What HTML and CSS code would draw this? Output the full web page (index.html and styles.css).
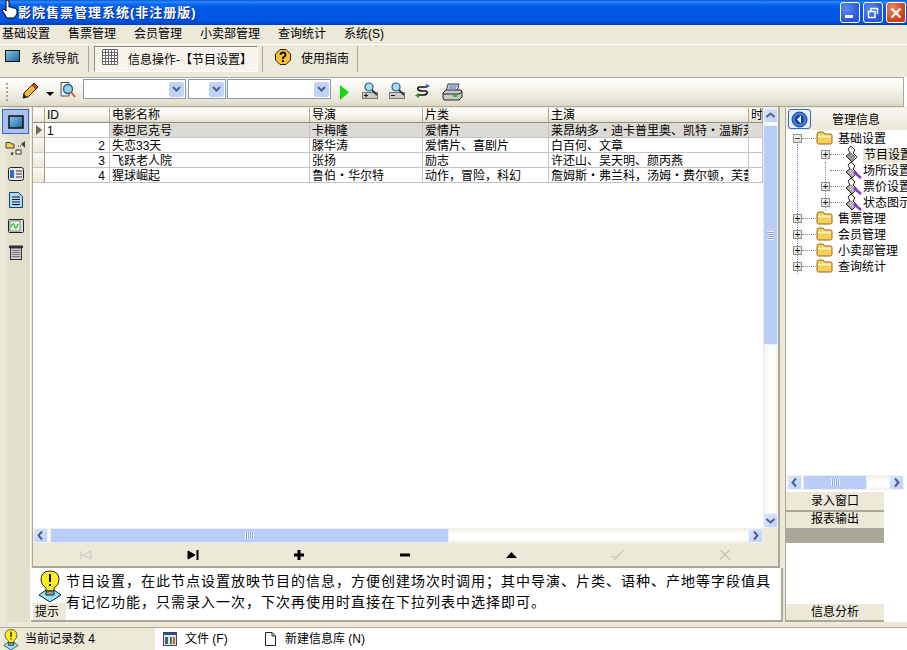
FILE: index.html
```html
<!DOCTYPE html>
<html lang="zh">
<head>
<meta charset="utf-8">
<title>影院售票管理系统</title>
<link rel="stylesheet" href="styles.css">
</head>
<body>
<svg class="cursor" width="18" height="19" viewBox="0 0 18 19"><path d="M6 0 Q8 0 8 2 V7 L10 7 L12 8 L14 8 L16 10 V14 L13 18 H6 L1 10 L3 9 L5 11 V2 Q5 0 6 0Z" fill="#fff" stroke="#000"/></svg>

<header class="titlebar">
  <span class="title">影院售票管理系统(非注册版)</span>
  <div class="winbtns">
    <span class="winbtn"><i class="min"></i></span>
    <span class="winbtn"><svg width="12" height="12" viewBox="0 0 12 12"><path d="M4 1.5 H10.5 V7 M1.5 4.5 H8 V10.5 H1.5Z M4 1 V4" fill="none" stroke="#fff" stroke-width="1.4"/></svg></span>
    <span class="winbtn close"><svg width="12" height="12" viewBox="0 0 12 12"><path d="M1.5 1.5 L10.5 10.5 M10.5 1.5 L1.5 10.5" stroke="#fff" stroke-width="2"/></svg></span>
  </div>
</header>

<nav class="menubar">
  <span>基础设置</span><span>售票管理</span><span>会员管理</span><span>小卖部管理</span><span>查询统计</span><span>系统(S)</span>
</nav>

<div class="tabbar">
  <div class="tab tab-first">
    <svg width="15" height="12" viewBox="0 0 15 12"><defs><linearGradient id="scr" x1="0" y1="0" x2="1" y2="1"><stop offset="0" stop-color="#8fc4e8"/><stop offset="1" stop-color="#14689c"/></linearGradient></defs><rect x=".5" y=".5" width="14" height="11" fill="url(#scr)" stroke="#111"/></svg>
    <span>系统导航</span>
  </div>
  <div class="tab tab-active">
    <svg width="16" height="16" viewBox="0 0 16 16"><path d="M.5 .5 H15.5 V15.5 H.5Z M3.5 0 V16 M6.5 0 V16 M9.5 0 V16 M12.5 0 V16 M0 3.5 H16 M0 6.5 H16 M0 9.5 H16 M0 12.5 H16" fill="#fff" stroke="#666"/></svg>
    <span>信息操作-【节目设置】</span>
  </div>
  <div class="tab tab-help">
    <svg width="16" height="16" viewBox="0 0 16 16"><path d="M5 .5 H11 L15.5 5 V11 L11 15.5 H5 L.5 11 V5Z" fill="#fbc02d" stroke="#222"/><path d="M5.5 6 Q5.5 3.5 8 3.5 Q10.5 3.5 10.5 6 Q10.5 7.5 8 8.5 V10" fill="none" stroke="#111" stroke-width="1.8"/><rect x="7" y="11" width="2" height="2" fill="#111"/></svg>
    <span>使用指南</span>
  </div>
</div>

<div class="toolbar">
  <span class="grip"></span>
  <svg class="t-pencil" width="17" height="17" viewBox="0 0 17 17"><path d="M12 1 L16 5 L6 15 L1 16 L2 11Z" fill="#f7b733" stroke="#222"/><path d="M12 1 L16 5 L14 7 L10 3Z" fill="#d9432f" stroke="#222" stroke-width=".7"/><path d="M1 16 L2 12 L5 15Z" fill="#222"/></svg>
  <span class="t-drop"></span>
  <svg class="t-find" width="16" height="17" viewBox="0 0 16 17"><path d="M1 .5 H9 V14 H1Z" fill="#eee" stroke="#555"/><circle cx="8" cy="7" r="4.5" fill="#8fd0ee" stroke="#2a5c7c" stroke-width="1.4"/><path d="M11 10 L15 15" stroke="#d9582f" stroke-width="2"/></svg>
  <div class="combo c1"><b><svg width="15" height="15" viewBox="0 0 15 15"><path d="M4 5 L7.5 8.5 L11 5" fill="none" stroke="#4d6185" stroke-width="2"/></svg></b></div>
  <div class="combo c2"><b><svg width="15" height="15" viewBox="0 0 15 15"><path d="M4 5 L7.5 8.5 L11 5" fill="none" stroke="#4d6185" stroke-width="2"/></svg></b></div>
  <div class="combo c3"><b><svg width="15" height="15" viewBox="0 0 15 15"><path d="M4 5 L7.5 8.5 L11 5" fill="none" stroke="#4d6185" stroke-width="2"/></svg></b></div>
  <svg class="t-play" width="9" height="15" viewBox="0 0 9 15"><path d="M0 0 L9 7.5 L0 15Z" fill="#12d812"/></svg>
  <svg class="t-zoom" width="16" height="17" viewBox="0 0 16 17"><rect x=".5" y="10.5" width="15" height="6" fill="#ccc" stroke="#777"/><path d="M2 13.5 H6 M4 11.5 V15.5" stroke="#111"/><circle cx="7" cy="5" r="4" fill="#a8dcf2" stroke="#2a5c7c" stroke-width="1.2"/><path d="M10 8 L15 13" stroke="#333" stroke-width="1.8"/></svg>
  <svg class="t-zoom" width="16" height="17" viewBox="0 0 16 17"><rect x=".5" y="10.5" width="15" height="6" fill="#ccc" stroke="#777"/><path d="M2 13.5 H6" stroke="#111"/><circle cx="7" cy="5" r="4" fill="#a8dcf2" stroke="#2a5c7c" stroke-width="1.2"/><path d="M10 8 L15 13" stroke="#333" stroke-width="1.8"/></svg>
  <svg class="t-swap" width="15" height="15" viewBox="0 0 15 15"><path d="M12 4 H5 Q2 4 3 6.5 Q4 8 7 8 H10 Q13 8 12 10.5 Q11 12 8 12 H3" fill="none" stroke="#111" stroke-width="1.6"/><path d="M11 1 L15 3 L11 5Z" fill="#1f55d8"/><path d="M4 10 L0 12.5 L4 15Z" fill="#1a9a1a"/></svg>
  <svg class="t-print" width="21" height="18" viewBox="0 0 21 18"><path d="M6 1 H17 L15 9 H4Z" fill="#dfe6f6" stroke="#333"/><path d="M7 3 H15 M6.5 5 H14" stroke="#4267c6"/><path d="M1 10 L4 7 H19 L20 9 V14 L17 17 H2 L1 15Z" fill="#c9c9c9" stroke="#222"/><path d="M1 11 H17 L20 9" fill="none" stroke="#222"/><rect x="11" y="12" width="4" height="2" fill="#1cc71c"/></svg>
</div>

<main class="main">
  <aside class="sidebar">
    <div class="side-btn side-active"><svg width="16" height="14" viewBox="0 0 16 14"><rect x="1" y="1" width="14" height="12" fill="url(#scr)" stroke="#111" stroke-width="1.5"/></svg></div>
    <div class="side-btn"><svg width="21" height="16" viewBox="0 0 21 16"><path d="M1 2.5 H5 L6 4 H9 V8 H1Z" fill="#f5d048" stroke="#444"/><path d="M16 4 L20 1 V8Z" fill="#444"/><path d="M6.5 12.5 H9 M13 9 V13 M13 6 H16" stroke="#333" stroke-dasharray="1 1"/><rect x="11" y="10" width="5" height="4" fill="#fff" stroke="#333"/><rect x="6" y="13" width="2" height="2" fill="#444"/></svg></div>
    <div class="side-btn"><svg width="16" height="14" viewBox="0 0 16 14"><rect x=".5" y=".5" width="15" height="13" rx="2" fill="#e9e9e9" stroke="#222"/><rect x="2" y="3" width="4" height="8" fill="#3f6ac0"/><path d="M8 4 H14 M8 7 H14 M8 10 H14" stroke="#333"/></svg></div>
    <div class="side-btn"><svg width="14" height="16" viewBox="0 0 14 16"><path d="M.5 .5 H9.5 L13.5 4.5 V15.5 H.5Z" fill="#a8dcfa" stroke="#1c3d75"/><path d="M3 5 H11 M3 7.5 H11 M3 10 H11 M3 12.5 H11" stroke="#112"/></svg></div>
    <div class="side-btn"><svg width="16" height="14" viewBox="0 0 16 14"><rect x=".5" y=".5" width="15" height="13" rx="1" fill="#ddd" stroke="#222"/><rect x="2" y="2" width="10" height="10" fill="#e8f6e8" stroke="#333" stroke-width=".5"/><path d="M3 8 Q5 2 6.5 7 Q8 12 10 5" fill="none" stroke="#1fc41f" stroke-width="1.3"/></svg></div>
    <div class="side-btn"><svg width="16" height="15" viewBox="0 0 16 15"><rect x="1" y=".5" width="14" height="2.5" fill="#333"/><rect x="2.5" y="3" width="11" height="11.5" fill="#ccc" stroke="#333"/><path d="M4 5.5 H12 M4 7.5 H12 M4 9.5 H12 M4 11.5 H12" stroke="#777"/></svg></div>
  </aside>

  <section class="center">
    <div class="gridpanel">
      <div class="gridbody">
        <div class="gridleft">
          <div class="tablewrap">
            <table class="grid">
              <colgroup><col class="c-ind"><col class="c-id"><col class="c-name"><col class="c-dir"><col class="c-gen"><col class="c-lead"><col class="c-time"></colgroup>
              <thead>
                <tr><th></th><th>ID</th><th>电影名称</th><th>导演</th><th>片类</th><th>主演</th><th>时</th></tr>
              </thead>
              <tbody>
                <tr class="sel"><td class="ind"><i class="arrow"></i></td><td class="idl">1</td><td class="g">泰坦尼克号</td><td class="g">卡梅隆</td><td class="g">爱情片</td><td class="g">莱昂纳多・迪卡普里奥、凯特・温斯莱特</td><td class="g"></td></tr>
                <tr><td class="ind"></td><td class="idr">2</td><td>失恋33天</td><td>滕华涛</td><td>爱情片、喜剧片</td><td>白百何、文章</td><td></td></tr>
                <tr><td class="ind"></td><td class="idr">3</td><td>飞跃老人院</td><td>张扬</td><td>励志</td><td>许还山、吴天明、颜丙燕</td><td></td></tr>
                <tr><td class="ind"></td><td class="idr">4</td><td>猩球崛起</td><td>鲁伯・华尔特</td><td>动作，冒险，科幻</td><td>詹姆斯・弗兰科，汤姆・费尔顿，芙蕾达・平托</td><td></td></tr>
              </tbody>
            </table>
          </div>
          <div class="hscroll">
            <span class="sb-btn"><svg width="13" height="13" viewBox="0 0 13 13"><path d="M8 2.5 L4.5 6.5 L8 10.5" fill="none" stroke="#4d6185" stroke-width="2"/></svg></span>
            <span class="hthumb main-thumb"><i class="grip-h"></i></span>
            <span class="sb-fill"></span>
            <span class="sb-btn"><svg width="13" height="13" viewBox="0 0 13 13"><path d="M5 2.5 L8.5 6.5 L5 10.5" fill="none" stroke="#4d6185" stroke-width="2"/></svg></span>
          </div>
        </div>
        <div class="vscroll">
          <span class="sb-btn"><svg width="13" height="13" viewBox="0 0 13 13"><path d="M2.5 8 L6.5 4.5 L10.5 8" fill="none" stroke="#4d6185" stroke-width="2"/></svg></span>
          <span class="vthumb"><i class="grip-v"></i></span>
          <span class="sb-fill"></span>
          <span class="sb-btn"><svg width="13" height="13" viewBox="0 0 13 13"><path d="M2.5 5 L6.5 8.5 L10.5 5" fill="none" stroke="#4d6185" stroke-width="2"/></svg></span>
        </div>
      </div>
      <div class="navbar">
        <span class="nav-cell"><svg width="12" height="10" viewBox="0 0 12 10"><path d="M1 1 V9 M11 1 L3 5 L11 9Z" fill="none" stroke="#c9c6b8"/></svg></span>
        <span class="nav-cell"><svg width="12" height="10" viewBox="0 0 12 10"><path d="M1 1 L8 5 L1 9Z" fill="#000" stroke="#000"/><path d="M10.5 0 V10" stroke="#000" stroke-width="2"/></svg></span>
        <span class="nav-cell"><svg width="10" height="10" viewBox="0 0 10 10"><path d="M5 0 V10 M0 5 H10" stroke="#000" stroke-width="3"/></svg></span>
        <span class="nav-cell"><svg width="10" height="4" viewBox="0 0 10 4"><rect width="10" height="3" y="0.5" fill="#000"/></svg></span>
        <span class="nav-cell"><svg width="11" height="6" viewBox="0 0 11 6"><path d="M5.5 0 L11 6 H0Z" fill="#000"/></svg></span>
        <span class="nav-cell"><svg width="14" height="12" viewBox="0 0 14 12"><path d="M1 8 L4 11 L13 1 L4 8.5 L3 7Z" fill="none" stroke="#c9c6b8"/></svg></span>
        <span class="nav-cell"><svg width="12" height="12" viewBox="0 0 12 12"><path d="M1 1 L11 11 M11 1 L1 11 M2 1 L11 10 M10 1 L1 10" stroke="#c9c6b8"/></svg></span>
      </div>
    </div>
    <div class="tip">
      <div class="tip-side">
        <svg class="tip-bulb" width="24" height="32" viewBox="0 0 24 32"><path d="M12 17 L23 25 L12 32 L1 25Z" fill="#8fe6f2" stroke="#123"/><path d="M12 1 Q21 1 21 10 Q21 15 16 18 V21 H8 V18 Q3 15 3 10 Q3 1 12 1Z" fill="#ffee22" stroke="#222"/><path d="M11 4 H13 V12 H11Z M11 14 H13 V16 H11Z" fill="#111"/><path d="M8 21 H16 V25 H8Z" fill="#999" stroke="#222"/></svg>
        <span class="tip-label">提示</span>
      </div>
      <p class="tip-text">节目设置，在此节点设置放映节目的信息，方便创建场次时调用；其中导演、片类、语种、产地等字段值具有记忆功能，只需录入一次，下次再使用时直接在下拉列表中选择即可。</p>
    </div>
  </section>

  <aside class="right">
    <div class="right-head">
      <span class="back"><svg width="17" height="17" viewBox="0 0 17 17"><circle cx="8.5" cy="8.5" r="7.5" fill="#3d7ee0" stroke="#123a8a"/><circle cx="8.5" cy="8.5" r="4.5" fill="#0e3f9e"/><path d="M10 4.5 L6 8.5 L10 12.5Z" fill="#fff"/></svg></span>
      <span class="right-title">管理信息</span>
    </div>
    <div class="tree">
      <i class="vline v1"></i><i class="vline v2"></i>
      <div class="node"><span class="exp">−</span><i class="dots"></i><svg width="17" height="14" viewBox="0 0 17 14"><path d="M1 3.5 Q1 1 3 1 H7 L9 3 H14.5 Q16 3 16 4.5 V11.5 Q16 13 14.5 13 H2.5 Q1 13 1 11.5Z" fill="#f6cd58" stroke="#8f6a14"/><path d="M2 5.5 H15" stroke="#fff0b0" stroke-width="2"/></svg><span class="lbl">基础设置</span></div>
      <div class="node sub"><span class="exp">+</span><i class="dots"></i><svg width="18" height="18" viewBox="0 0 18 18"><path d="M7 1 L11 5 L9 8 L13 12 L8 17 L2 11 L6 8 L4 4Z" fill="#eee" stroke="#333"/><path d="M3 11 L8 16 L11 12 L7 8Z" fill="#999" stroke="#555" stroke-width=".5"/></svg><span class="lbl selected">节目设置</span></div>
      <div class="node sub"><span class="exp blank"></span><i class="dots"></i><svg width="18" height="18" viewBox="0 0 18 18"><path d="M7 1 L11 5 L9 8 L13 12 L8 17 L2 11 L6 8 L4 4Z" fill="#fff" stroke="#222"/><path d="M3 11 L8 16 L11 12 L7 8Z" fill="#bbb" stroke="#555" stroke-width=".5"/><path d="M10 11 L17 17" stroke="#8a2fc9" stroke-width="2.4"/></svg><span class="lbl">场所设置</span></div>
      <div class="node sub"><span class="exp">+</span><i class="dots"></i><svg width="18" height="18" viewBox="0 0 18 18"><path d="M7 1 L11 5 L9 8 L13 12 L8 17 L2 11 L6 8 L4 4Z" fill="#fff" stroke="#222"/><path d="M3 11 L8 16 L11 12 L7 8Z" fill="#bbb" stroke="#555" stroke-width=".5"/><path d="M10 11 L17 17" stroke="#8a2fc9" stroke-width="2.4"/></svg><span class="lbl">票价设置</span></div>
      <div class="node sub"><span class="exp">+</span><i class="dots"></i><svg width="18" height="18" viewBox="0 0 18 18"><path d="M7 1 L11 5 L9 8 L13 12 L8 17 L2 11 L6 8 L4 4Z" fill="#fff" stroke="#222"/><path d="M3 11 L8 16 L11 12 L7 8Z" fill="#bbb" stroke="#555" stroke-width=".5"/><path d="M10 11 L17 17" stroke="#8a2fc9" stroke-width="2.4"/></svg><span class="lbl">状态图示</span></div>
      <div class="node"><span class="exp">+</span><i class="dots"></i><svg width="17" height="14" viewBox="0 0 17 14"><path d="M1 3.5 Q1 1 3 1 H7 L9 3 H14.5 Q16 3 16 4.5 V11.5 Q16 13 14.5 13 H2.5 Q1 13 1 11.5Z" fill="#f6cd58" stroke="#8f6a14"/><path d="M2 5.5 H15" stroke="#fff0b0" stroke-width="2"/></svg><span class="lbl">售票管理</span></div>
      <div class="node"><span class="exp">+</span><i class="dots"></i><svg width="17" height="14" viewBox="0 0 17 14"><path d="M1 3.5 Q1 1 3 1 H7 L9 3 H14.5 Q16 3 16 4.5 V11.5 Q16 13 14.5 13 H2.5 Q1 13 1 11.5Z" fill="#f6cd58" stroke="#8f6a14"/><path d="M2 5.5 H15" stroke="#fff0b0" stroke-width="2"/></svg><span class="lbl">会员管理</span></div>
      <div class="node"><span class="exp">+</span><i class="dots"></i><svg width="17" height="14" viewBox="0 0 17 14"><path d="M1 3.5 Q1 1 3 1 H7 L9 3 H14.5 Q16 3 16 4.5 V11.5 Q16 13 14.5 13 H2.5 Q1 13 1 11.5Z" fill="#f6cd58" stroke="#8f6a14"/><path d="M2 5.5 H15" stroke="#fff0b0" stroke-width="2"/></svg><span class="lbl">小卖部管理</span></div>
      <div class="node"><span class="exp">+</span><i class="dots"></i><svg width="17" height="14" viewBox="0 0 17 14"><path d="M1 3.5 Q1 1 3 1 H7 L9 3 H14.5 Q16 3 16 4.5 V11.5 Q16 13 14.5 13 H2.5 Q1 13 1 11.5Z" fill="#f6cd58" stroke="#8f6a14"/><path d="M2 5.5 H15" stroke="#fff0b0" stroke-width="2"/></svg><span class="lbl">查询统计</span></div>
    </div>
    <div class="hscroll rscroll">
      <span class="sb-btn"><svg width="13" height="13" viewBox="0 0 13 13"><path d="M8 2.5 L4.5 6.5 L8 10.5" fill="none" stroke="#4d6185" stroke-width="2"/></svg></span>
      <span class="hthumb right-thumb"><i class="grip-h"></i></span>
      <span class="sb-fill"></span>
      <span class="sb-btn"><svg width="13" height="13" viewBox="0 0 13 13"><path d="M5 2.5 L8.5 6.5 L5 10.5" fill="none" stroke="#4d6185" stroke-width="2"/></svg></span>
    </div>
    <div class="r-btn r-first">录入窗口</div>
    <div class="r-btn r-second">报表输出</div>
    <div class="r-dark"></div>
    <div class="r-space"></div>
    <div class="r-btn r-last">信息分析</div>
  </aside>
</main>
<div class="sep"></div>

<footer class="statusbar">
  <div class="st st-1"><svg width="16" height="21" viewBox="0 0 24 32"><path d="M12 17 L23 25 L12 32 L1 25Z" fill="#8fe6f2" stroke="#123"/><path d="M12 1 Q21 1 21 10 Q21 15 16 18 V21 H8 V18 Q3 15 3 10 Q3 1 12 1Z" fill="#ffee22" stroke="#222"/><path d="M11 4 H13 V12 H11Z M11 14 H13 V16 H11Z" fill="#111"/><path d="M8 21 H16 V25 H8Z" fill="#999" stroke="#222"/></svg><span>当前记录数 4</span></div>
  <div class="st st-2"><svg width="14" height="14" viewBox="0 0 14 14"><rect x=".5" y=".5" width="13" height="13" fill="#dfe3ea" stroke="#445"/><rect x="1" y="1" width="12" height="2" fill="#2b4f9c"/><rect x="2" y="5" width="3" height="7" fill="#556"/><rect x="7" y="5" width="2" height="7" fill="#2a8a4a"/><rect x="10" y="5" width="2" height="7" fill="#c9582a"/></svg><span>文件 (F)</span></div>
  <div class="st st-3"><svg width="11" height="14" viewBox="0 0 11 14"><path d="M.5 .5 H7 L10.5 4 V13.5 H.5Z M7 .5 V4 H10.5" fill="#fff" stroke="#222"/></svg><span>新建信息库 (N)</span></div>
</footer>
</body>
</html>
```

FILE: styles.css
```css
* { box-sizing: border-box; }
html, body { margin: 0; padding: 0; }
body {
  width: 907px;
  height: 650px;
  overflow: hidden;
  position: relative;
  display: flex;
  flex-direction: column;
  background: #fff;
  color: #000;
  font: 12px/15px "Liberation Sans", "Noto Sans CJK SC", sans-serif;
}
svg { display: block; }
.cursor { position: absolute; left: 1px; top: 0; z-index: 5; }

/* Title bar */
.titlebar {
  height: 25px;
  flex: none;
  display: flex;
  align-items: center;
  justify-content: space-between;
  padding: 0 1px 0 18px;
  background: linear-gradient(#0a56d8 0, #2d8bf6 2px, #0a6af0 4px, #0058e6 9px, #0055e5 20px, #0046c4 24px, #003fb4 25px);
}
.title {
  color: #fff;
  font-size: 13px;
  font-weight: 700;
  letter-spacing: 1px;
  text-shadow: 1px 1px 0 #0a2a80;
}
.winbtns { display: flex; gap: 3px; }
.winbtn {
  width: 20px;
  height: 21px;
  border: 1px solid #fff;
  border-radius: 3px;
  background: radial-gradient(circle at 30% 30%, #5b8cf0, #2a55d8 70%);
  display: flex;
  align-items: center;
  justify-content: center;
}
.winbtn.close { background: radial-gradient(circle at 30% 30%, #e98a68, #cf3d14 70%); }
.min { width: 8px; height: 3px; margin: 7px 3px 0 0; background: #fff; }

/* Menu */
.menubar {
  height: 20px;
  flex: none;
  display: flex;
  gap: 18px;
  align-items: center;
  padding: 0 0 1px 2px;
  background: #ece9d8;
  border-bottom: 1px solid #fff;
}

/* Tabs */
.tabbar {
  height: 32px;
  flex: none;
  display: flex;
  background: #ece9d8;
}
.tab {
  display: flex;
  align-items: center;
  height: 26px;
  margin-top: 1px;
}
.tab-first { width: 89px; padding-left: 5px; gap: 11px; border-right: 1px solid #aca899; }
.tab-first svg { margin-bottom: 6px; }
.tab-first span { margin-top: 1px; }
.tab-active {
  width: 164px;
  margin-left: 5px;
  padding-left: 7px;
  gap: 10px;
  border: 1px solid;
  border-color: #8f8d7f #fff #fff #8f8d7f;
  background: #f6f4ec;
}
.tab-active svg { margin-bottom: 4px; }
.tab-active span { margin-top: 2px; }
.tab-help {
  width: 96px;
  margin-left: 4px;
  padding-left: 12px;
  gap: 10px;
  border-left: 1px solid #aca899;
  border-right: 1px solid #aca899;
}
.tab-help svg { margin-bottom: 5px; }
.tab-help span { margin-top: 1px; }

/* Toolbar */
.toolbar {
  width: 904px;
  height: 30px;
  flex: none;
  display: flex;
  align-items: center;
  border: 1px solid #aca899;
  border-left: 0;
  background: linear-gradient(#fff 0, #f8f7f0 30%, #e6e3d2 85%, #d8d5c0 100%);
}
.grip {
  width: 2px;
  height: 19px;
  margin-left: 6px;
  background: repeating-linear-gradient(#a8a594 0 2px, transparent 2px 4px);
}
.t-pencil { margin-left: 14px; margin-bottom: 3px; }
.t-drop {
  width: 0;
  height: 0;
  margin: 3px 0 0 7px;
  border: 4px solid transparent;
  border-top: 4px solid #000;
  border-bottom: 0;
}
.t-find { margin-left: 6px; margin-bottom: 3px; }
.combo {
  height: 20px;
  border: 1px solid #7f9db9;
  background: #fff;
  position: relative;
  margin-bottom: 7px;
}
.combo b {
  position: absolute;
  right: 1px;
  top: 2px;
  width: 15px;
  height: 15px;
  background: #c1d2f7;
  border-radius: 2px;
}
.c1 { width: 103px; margin-left: 7px; }
.c2 { width: 38px; margin-left: 2px; }
.c3 { width: 104px; margin-left: 1px; }
.t-play { margin-left: 9px; }
.t-zoom { margin-left: 13px; margin-bottom: 3px; }
.t-zoom + .t-zoom { margin-left: 11px; }
.t-swap { margin-left: 10px; margin-bottom: 3px; }
.t-print { margin-left: 12px; margin-bottom: 1px; }

/* Main area */
.main {
  height: 515px;
  flex: none;
  display: flex;
  background: #ece9d8;
}
.sidebar {
  width: 31px;
  flex: none;
  display: flex;
  flex-direction: column;
  padding: 2px 1px 0 2px;
  background: linear-gradient(90deg, #ece9d8 0 6px, #e2dfcc 8px 100%);
  border-right: 1px solid #fff;
}
.side-btn {
  height: 26px;
  flex: none;
  display: flex;
  align-items: center;
  justify-content: center;
}
.side-active {
  height: 25px;
  margin-bottom: 1px;
  border: 1px solid #316ac5;
  background: #a9c0ec;
}
.center {
  width: 752px;
  flex: none;
  display: flex;
  flex-direction: column;
}
.gridpanel {
  height: 461px;
  flex: none;
  margin-left: 1px;
  width: 748px;
  padding-top: 1px;
  border-right: 2px solid #aca899;
  border-left: 1px solid #aca899;
  border-bottom: 2px solid #aca899;
  display: flex;
  flex-direction: column;
}
.gridbody { height: 435px; display: flex; flex: none; }
.gridleft { width: 730px; display: flex; flex-direction: column; background: #fff; }
.tablewrap { height: 420px; flex: none; overflow: hidden; background: #fff; }

.grid {
  table-layout: fixed;
  width: 730px;
  border-collapse: separate;
  border-spacing: 0;
}
.c-ind { width: 12px; }
.c-id { width: 65px; }
.c-name { width: 200px; }
.c-dir { width: 113px; }
.c-gen { width: 126px; }
.c-lead { width: 200px; }
.c-time { width: 14px; }
.grid th {
  height: 15px;
  padding: 1px 0 0 2px;
  font-weight: 400;
  line-height: 13px;
  text-align: left;
  background: linear-gradient(#fff, #f4f2e8 60%, #e4e1cf);
  border-right: 1px solid #aca899;
  border-bottom: 1px solid #8f8d80;
  overflow-x: clip;
  white-space: nowrap;
}
.grid td {
  height: 15px;
  padding: 2px 0 0 2px;
  line-height: 12px;
  border-right: 1px solid #c4c4c4;
  border-bottom: 1px solid #c4c4c4;
  overflow-x: clip;
  white-space: nowrap;
}
.grid td.ind {
  position: relative;
  padding: 0;
  background: linear-gradient(#fbfaf4, #ece9d8);
  border-right: 1px solid #9a9888;
}
.grid td.idr { text-align: right; padding-right: 4px; }
.grid td.g { background: #dcdad5; }
.arrow {
  position: absolute;
  left: 3px;
  top: 2px;
  width: 0;
  height: 0;
  border-left: 6px solid #6a6858;
  border-top: 5px solid transparent;
  border-bottom: 5px solid transparent;
}

/* Scrollbars */
.hscroll {
  height: 15px;
  flex: none;
  display: flex;
  background: linear-gradient(#f0eee4, #fff 45%, #fff 70%, #f2f0e6);
}
.vscroll {
  width: 15px;
  height: 420px;
  flex: none;
  display: flex;
  flex-direction: column;
  background: linear-gradient(90deg, #f0eee4, #fff 45%, #fff 70%, #f2f0e6);
}
.sb-fill { flex: 1; }
.sb-btn {
  flex: none;
  width: 15px;
  height: 15px;
  background: linear-gradient(135deg, #dce6fc, #bccffa);
  border: 1px solid #eef3fe;
  border-radius: 2px;
}
.hthumb, .vthumb {
  flex: none;
  display: flex;
  align-items: center;
  justify-content: center;
  background: #b9cdf7;
  border: 1px solid #e6edfd;
  border-radius: 2px;
}
.main-thumb { width: 399px; height: 15px; margin-left: 2px; }
.right-thumb { width: 64px; height: 15px; margin-left: 1px; }
.vthumb { width: 15px; height: 220px; margin-top: 2px; }
.grip-h { width: 9px; height: 7px; background: repeating-linear-gradient(90deg, #eef3fe 0 1px, #8da8e0 1px 2px); }
.grip-v { width: 7px; height: 9px; background: repeating-linear-gradient(#eef3fe 0 1px, #8da8e0 1px 2px); }

.navbar {
  flex: 1;
  display: flex;
  background: #ece9d8;
}
.nav-cell {
  flex: 1;
  display: flex;
  align-items: center;
  justify-content: center;
}

/* Tip */
.tip {
  height: 54px;
  flex: none;
  display: flex;
  background: #fff;
  border-right: 2px solid #aca899;
  border-bottom: 2px solid #aca899;
}
.tip-side {
  width: 35px;
  flex: none;
  display: flex;
  flex-direction: column;
  align-items: center;
  justify-content: space-between;
}
.tip-bulb { margin: 2px 0 0 3px; flex: none; }
.tip-label {
  width: 33px;
  margin-left: 2px;
  height: 17px;
  line-height: 19px;
  padding-left: 2px;
  background: #ece9d8;
}
.tip-text {
  margin: 3px 0 0;
  width: 712px;
  font-size: 14px;
  line-height: 21px;
  letter-spacing: 1px;
}

/* Right panel */
.right {
  width: 122px;
  flex: none;
  margin-left: 2px;
  margin-top: 1px;
  height: 514px;
  display: flex;
  flex-direction: column;
  background: #fff;
  border-left: 1px solid #aca899;
  overflow: hidden;
}
.right-head {
  height: 22px;
  flex: none;
  display: flex;
  align-items: center;
  background: linear-gradient(#f8f7f0, #ece9d8);
}
.back {
  width: 23px;
  height: 20px;
  margin-left: 2px;
  display: flex;
  align-items: center;
  justify-content: center;
  background: #e8eefc;
  border: 1px solid #316ac5;
  border-radius: 3px;
}
.right-title { margin: 2px 0 0 21px; }
.tree {
  position: relative;
  height: 345px;
  flex: none;
}
.vline { position: absolute; width: 0; border-left: 1px dotted #888; }
.v1 { left: 11px; top: 14px; height: 130px; }
.v2 { left: 39px; top: 32px; height: 48px; }
.node {
  height: 16px;
  display: flex;
  align-items: center;
  padding-left: 7px;
  white-space: nowrap;
}
.node.sub { padding-left: 35px; }
.exp {
  position: relative;
  z-index: 1;
  width: 9px;
  height: 9px;
  flex: none;
  border: 1px solid #8f8f8f;
  background: linear-gradient(135deg, #fff, #d8d5c8);
  font-size: 10px;
  line-height: 7px;
  text-align: center;
}
.exp.blank { visibility: hidden; }
.dots { width: 14px; flex: none; border-top: 1px dotted #888; }
.node > svg { flex: none; position: relative; z-index: 1; }
.lbl { margin: 2px 0 0 5px; }
.node.sub .lbl { margin-left: 1px; }
.node.sub .selected { background: #ece9d8; padding: 0 1px; margin-left: 1px; }
.rscroll { width: 118px; padding-left: 1px; }
.r-btn {
  width: 98px;
  flex: none;
  text-align: center;
  background: #ece9d8;
}
.r-first { height: 20px; margin-top: 2px; line-height: 19px; border-bottom: 2px solid #aca899; }
.r-second { height: 16px; line-height: 15px; }
.r-dark { width: 98px; height: 15px; flex: none; background: #aca899; }
.r-space { height: 61px; flex: none; }
.r-last { height: 18px; line-height: 16px; border-bottom: 2px solid #aca899; }

/* Status bar */
.sep {
  height: 6px;
  flex: none;
  background: #ece9d8;
  border-bottom: 1px solid #aca899;
}
.statusbar {
  flex: 1;
  display: flex;
  background: #fff;
}
.st {
  height: 22px;
  display: flex;
  align-items: center;
}
.st-1 { width: 155px; background: #ece9d8; padding-left: 3px; gap: 6px; }
.st-2 { width: 96px; margin-left: 4px; padding-left: 4px; gap: 8px; }
.st-3 { flex: 1; margin-left: 4px; padding-left: 6px; gap: 9px; }
```
